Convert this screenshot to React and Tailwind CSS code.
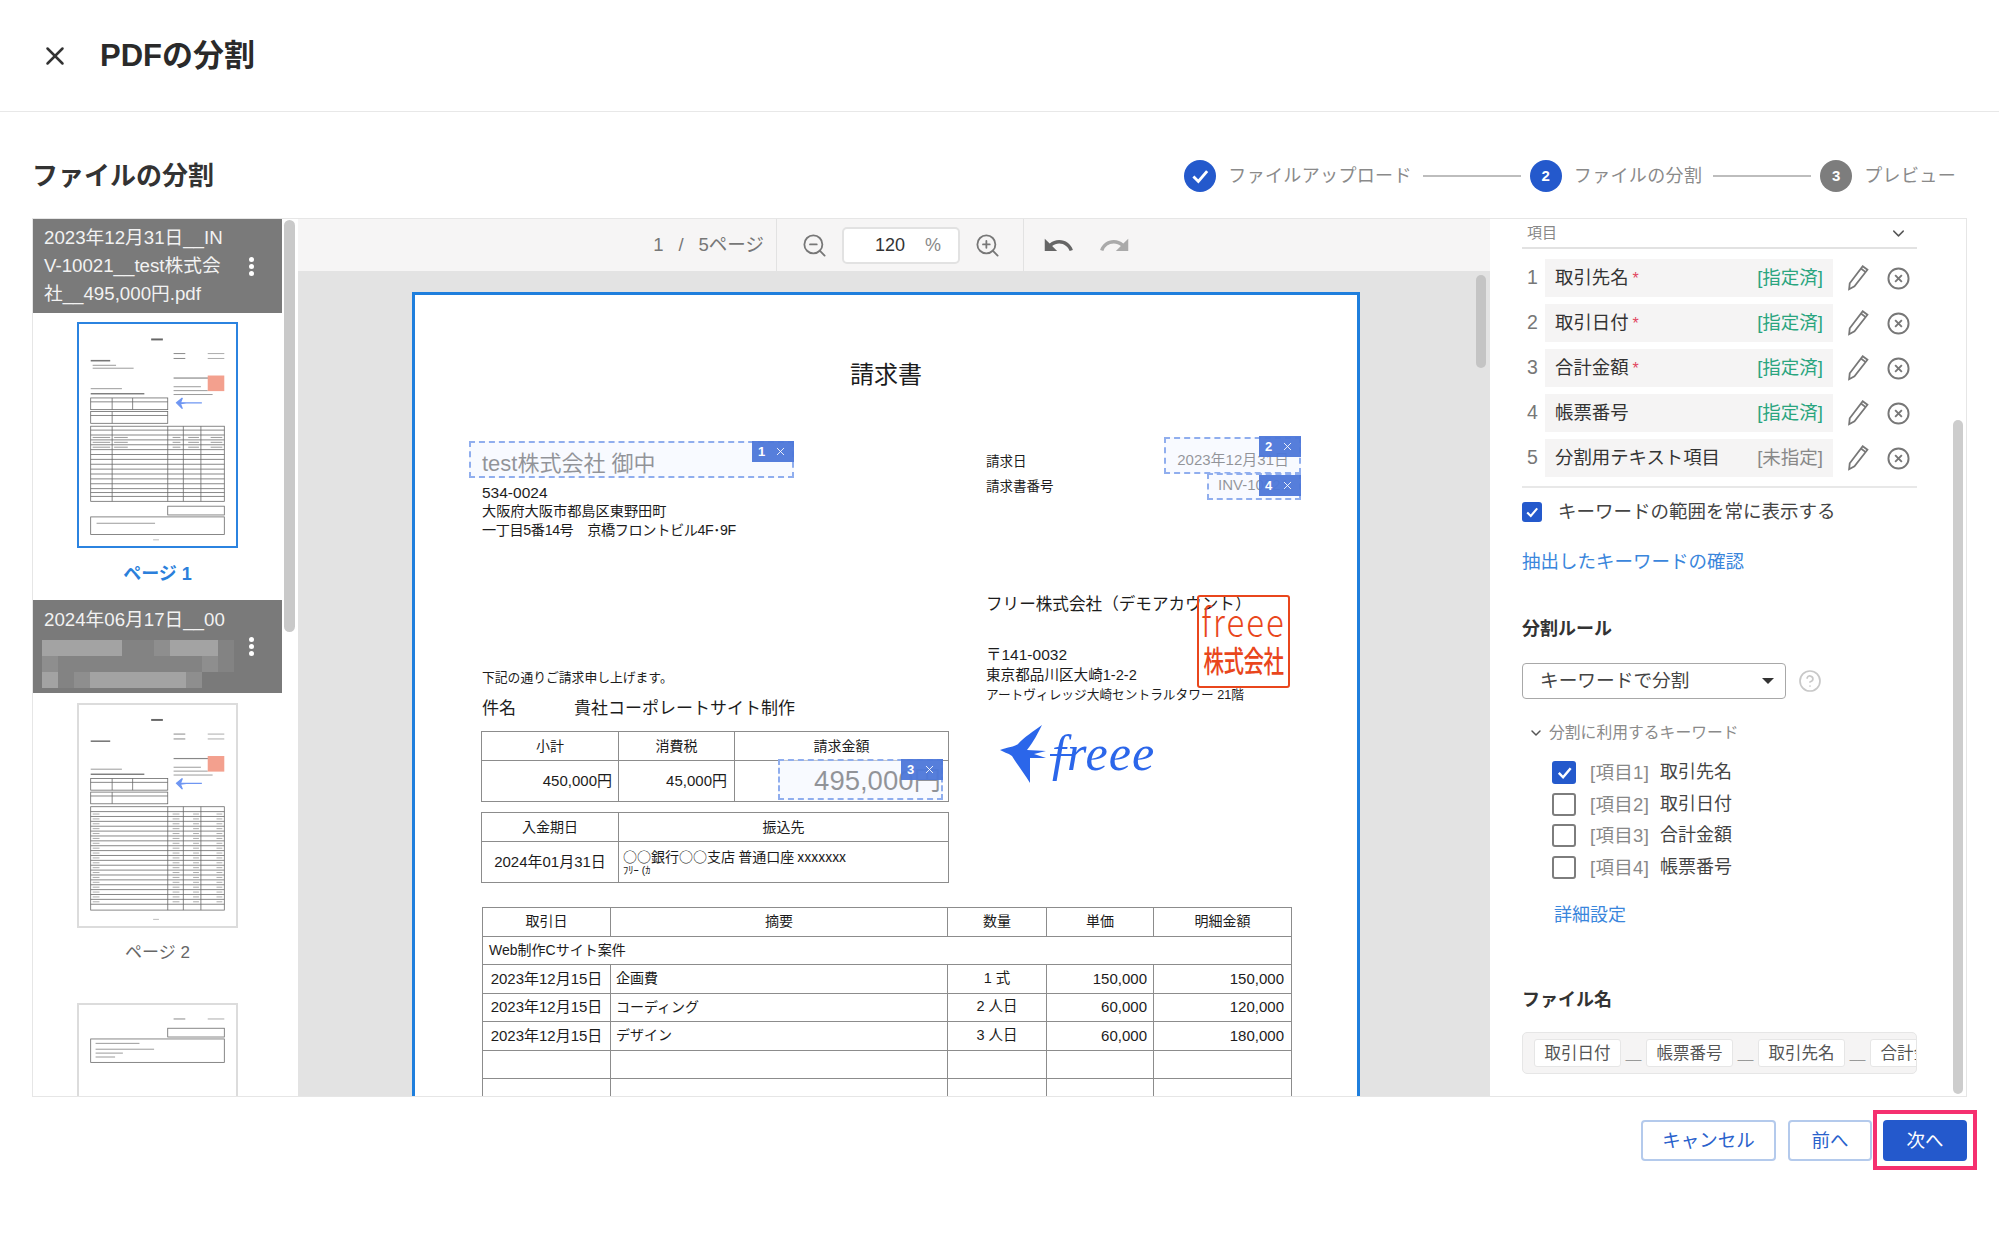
import { X, ZoomIn, ZoomOut, ChevronDown, CircleHelp } from "lucide-react";
import { MdUndo, MdRedo } from "react-icons/md";

const items = [
  { no: 1, name: "取引先名", required: true, done: true },
  { no: 2, name: "取引日付", required: true, done: true },
  { no: 3, name: "合計金額", required: true, done: true },
  { no: 4, name: "帳票番号", required: false, done: true },
  { no: 5, name: "分割用テキスト項目", required: false, done: false },
];

const keywords = [
  { tag: "[項目1]", name: "取引先名", checked: true },
  { tag: "[項目2]", name: "取引日付", checked: false },
  { tag: "[項目3]", name: "合計金額", checked: false },
  { tag: "[項目4]", name: "帳票番号", checked: false },
];

const lines = [
  ["2023年12月15日", "企画費", "1 式", "150,000", "150,000"],
  ["2023年12月15日", "コーディング", "2 人日", "60,000", "120,000"],
  ["2023年12月15日", "デザイン", "3 人日", "60,000", "180,000"],
  ["", "", "", "", ""],
  ["", "", "", "", ""],
];

const a = "bg-[#a3a3a3]";
const b = "bg-[#8e8e8e]";
const c = "bg-[#838383]";
const mosaic = [
  [a, a, a, a, a, c, c, b, a, a, a, c],
  [b, c, c, c, c, c, c, c, c, c, b, c],
  [a, c, b, a, a, a, a, a, a, b],
];

function CheckMark({ className }) {
  return (
    <svg viewBox="0 0 20 20" className={className} fill="none" stroke="white" strokeWidth="2.6">
      <path d="M4 10.5 L8.5 15 L16.5 5.5" />
    </svg>
  );
}

function Pencil() {
  return (
    <svg viewBox="2 2 18 22" className="w-[22px] h-[26px]" fill="none" stroke="#777" strokeWidth="1.5">
      <path d="M15 3 L19 6 L8 20 L3.5 22.5 L4 17.5 Z" />
      <path d="M13.5 5 L17.5 8" />
    </svg>
  );
}

function RemoveIcon() {
  return (
    <svg viewBox="0 0 24 24" className="w-[23px] h-[23px]" fill="none" stroke="#777" strokeWidth="2">
      <circle cx="12" cy="12" r="10.5" />
      <path d="M8.5 8.5 L15.5 15.5 M15.5 8.5 L8.5 15.5" />
    </svg>
  );
}

function Dots() {
  return (
    <div className="flex flex-col gap-[2px]">
      <span className="w-[5px] h-[5px] rounded-full bg-white" />
      <span className="w-[5px] h-[5px] rounded-full bg-white" />
      <span className="w-[5px] h-[5px] rounded-full bg-white" />
    </div>
  );
}

function MiniTable({ x, y, w, rowYs, colXs }) {
  const h = rowYs[rowYs.length - 1];
  return (
    <g stroke="#666" strokeWidth="0.8" fill="none">
      <rect x={x} y={y} width={w} height={h} />
      {rowYs.slice(0, -1).map((r) => (
        <line key={r} x1={x} x2={x + w} y1={y + r} y2={y + r} />
      ))}
      {colXs.map((cx) => (
        <line key={cx} x1={cx} x2={cx} y1={y} y2={y + h} />
      ))}
    </g>
  );
}

function MiniHead() {
  return (
    <>
      <rect x="74" y="14" width="12" height="2" fill="#666" />
      <rect x="12" y="36" width="20" height="1.6" fill="#777" />
      <rect x="97" y="29" width="12" height="1" fill="#888" />
      <rect x="97" y="34" width="12" height="1" fill="#888" />
      <rect x="132" y="29" width="17" height="1" fill="#aaa" />
      <rect x="132" y="34" width="17" height="1" fill="#aaa" />
      <rect x="97" y="54" width="40" height="1.2" fill="#888" />
      <rect x="97" y="63" width="28" height="1" fill="#999" />
      <rect x="97" y="67" width="35" height="1" fill="#999" />
      <rect x="97" y="71" width="40" height="1" fill="#999" />
      <rect x="132" y="52" width="17" height="16" fill="#f3a08e" />
      <rect x="12" y="65" width="32" height="1" fill="#999" />
      <rect x="12" y="70" width="55" height="1.4" fill="#777" />
      <path d="M100 80 L106 75 L104 80 L110 80 L104 81 L106 86 Z M110 80 H126" fill="#6f96f2" stroke="#6f96f2" strokeWidth="1.2" />
      <MiniTable x={12} y={75} w={79} rowYs={[4, 12]} colXs={[34, 55]} />
      <MiniTable x={12} y={89} w={79} rowYs={[4, 12]} colXs={[34]} />
    </>
  );
}

function ThumbOne() {
  const rowYs = [4, 9, 14, 19, 24, 29, 34, 39, 44, 49, 54, 59, 64, 68, 72, 77];
  return (
    <svg viewBox="0 0 161 226" className="w-[161px] h-[226px] border-[2.5px] border-[#2b83e0] bg-white shrink-0">
      <MiniHead />
      <rect x="14" y="41" width="24" height="1" fill="#999" />
      <rect x="14" y="44" width="42" height="1" fill="#999" />
      <MiniTable x={12} y={104} w={137} rowYs={rowYs} colXs={[34, 91, 107, 125]} />
      {[115, 120, 125].map((y) => (
        <g key={y} fill="#999">
          <rect x="14" y={y} width="18" height="1" />
          <rect x="36" y={y} width="14" height="1" />
          <rect x="96" y={y} width="8" height="1" />
          <rect x="112" y={y} width="11" height="1" />
          <rect x="135" y={y} width="12" height="1" />
        </g>
      ))}
      <MiniTable x={91} y={186} w={58} rowYs={[9]} colXs={[]} />
      <MiniTable x={12} y={197} w={137} rowYs={[18]} colXs={[]} />
      <rect x="18" y="203" width="60" height="1" fill="#999" />
      <rect x="76" y="220" width="6" height="1" fill="#bbb" />
    </svg>
  );
}

function ThumbTwo() {
  const rowYs = Array.from({ length: 20 }, (_, i) => 5 + i * 5).concat(106);
  return (
    <svg viewBox="0 0 161 226" className="w-[161px] h-[225px] border-2 border-[#dcdcdc] bg-white shrink-0">
      <MiniHead />
      <MiniTable x={12} y={104} w={137} rowYs={rowYs} colXs={[91, 107, 125]} />
      {rowYs.slice(0, 19).map((r) => (
        <g key={r} fill="#aaa">
          <rect x="14" y={104 + r + 2} width="7" height="1" />
          <rect x="96" y={104 + r + 2} width="7" height="1" />
          <rect x="117" y={104 + r + 2} width="6" height="1" />
          <rect x="141" y={104 + r + 2} width="6" height="1" />
        </g>
      ))}
      <rect x="76" y="219" width="6" height="1" fill="#bbb" />
    </svg>
  );
}

function ThumbThree() {
  return (
    <svg viewBox="0 0 161 226" className="w-[161px] h-[226px] border-2 border-[#dcdcdc] bg-white shrink-0">
      <rect x="97" y="13" width="12" height="1" fill="#888" />
      <rect x="132" y="13" width="17" height="1" fill="#aaa" />
      <MiniTable x={91} y={23} w={58} rowYs={[9]} colXs={[]} />
      <MiniTable x={12} y={34} w={137} rowYs={[24]} colXs={[]} />
      <rect x="17" y="38" width="45" height="1" fill="#999" />
      <rect x="17" y="44" width="60" height="1" fill="#999" />
      <rect x="17" y="48" width="28" height="1" fill="#999" />
      <rect x="17" y="52" width="20" height="1" fill="#999" />
    </svg>
  );
}

function ThumbColumn() {
  return (
    <div className="w-[265px] shrink-0 relative overflow-hidden">
      <div className="w-[249px] flex flex-col items-stretch">
        <div className="h-[94px] bg-[#7a7a7a] flex items-center justify-between pl-[11px] pr-[28px] text-[18.7px] leading-[28px] text-[#f2f2f2] whitespace-nowrap">
          <div>
            <div>2023年12月31日__IN</div>
            <div>V-10021__test株式会</div>
            <div>社__495,000円.pdf</div>
          </div>
          <Dots />
        </div>
        <div className="flex justify-center mt-[9px]">
          <ThumbOne />
        </div>
        <div className="h-[52px] flex items-center justify-center text-[18px] font-bold text-[#2b7fdb]">ページ 1</div>
        <div className="h-[93px] bg-[#7a7a7a] flex items-center justify-between pl-[9px] pr-[28px] text-[#f2f2f2] relative">
          <div className="flex flex-col">
            <div className="pl-[2px] text-[18.7px] leading-[28px] h-[35px] pt-[1px] whitespace-nowrap">2024年06月17日__00</div>
            {mosaic.map((row, i) => (
              <div key={i} className="flex">
                {row.map((cls, j) => (
                  <span key={j} className={`w-[16px] h-[16px] ${cls}`} />
                ))}
              </div>
            ))}
          </div>
          <Dots />
        </div>
        <div className="flex justify-center mt-[10px]">
          <ThumbTwo />
        </div>
        <div className="h-[75px] pt-[12px] text-center text-[17px] leading-[26px] text-[#666]">ページ 2</div>
        <div className="flex justify-center">
          <ThumbThree />
        </div>
      </div>
      <div className="absolute left-[251px] top-[1px] w-[11px] h-[412px] rounded-full bg-[#c9c9c9]" />
    </div>
  );
}

function Annotation({ no, boxClass, tagClass }) {
  return (
    <>
      <div className={`absolute border-2 border-dashed border-[#90aeee] bg-[#f2f6ff]/55 ${boxClass}`} />
      <div className={`absolute w-[42px] h-[21px] bg-[#4d77d9]/95 text-white flex items-center gap-[9px] pl-[6px] text-[13px] font-bold ${tagClass}`}>
        <span>{no}</span>
        <X size={13} strokeWidth={1.6} />
      </div>
    </>
  );
}

function Invoice() {
  return (
    <div className="relative w-[948px] h-[900px] ml-[114px] border-[3px] border-[#1f7fdd] bg-white text-[#1c1c1c] pl-[67px]">
      <div className="mt-[65px] h-[30px] -ml-[67px] text-center text-[24px] leading-[30px]">請求書</div>

      <div className="flex">
        <div className="w-[504px] shrink-0">
          <div className="mt-[59px] h-[30px] text-[22px] leading-[30px]">test株式会社 御中</div>
          <div className="mt-[4px] text-[14.2px] leading-[19px] whitespace-nowrap">
            <div className="text-[15.5px]">534-0024</div>
            <div>大阪府大阪市都島区東野田町</div>
            <div className="tracking-[-0.4px]">一丁目5番14号　京橋フロントビル4F･9F</div>
          </div>
          <div className="mt-[129px] h-[18px] text-[12.8px] leading-[18px]">下記の通りご請求申し上げます。</div>
          <div className="mt-[10px] h-[24px] flex text-[17px] leading-[24px]">
            <span className="w-[92px]">件名</span>
            <span>貴社コーポレートサイト制作</span>
          </div>
          <table className="mt-[10px] -ml-px w-[467px] table-fixed border-collapse text-[15px]">
            <colgroup>
              <col className="w-[137px]" />
              <col className="w-[116px]" />
              <col className="w-[214px]" />
            </colgroup>
            <tbody>
              <tr className="h-[29px] text-center text-[14px]">
                <td className="border border-[#8c8c8c]">小計</td>
                <td className="border border-[#8c8c8c]">消費税</td>
                <td className="border border-[#8c8c8c]">請求金額</td>
              </tr>
              <tr className="h-[41px] text-right">
                <td className="border border-[#8c8c8c] pr-[6px]">450,000円</td>
                <td className="border border-[#8c8c8c] pr-[7px]">45,000円</td>
                <td className="border border-[#8c8c8c] pr-[7px] text-[27.5px] leading-[30px]">495,000円</td>
              </tr>
            </tbody>
          </table>
          <table className="mt-[10px] -ml-px w-[467px] table-fixed border-collapse">
            <colgroup>
              <col className="w-[137px]" />
              <col className="w-[330px]" />
            </colgroup>
            <tbody>
              <tr className="h-[29px] text-center text-[14px]">
                <td className="border border-[#8c8c8c]">入金期日</td>
                <td className="border border-[#8c8c8c]">振込先</td>
              </tr>
              <tr className="h-[41px]">
                <td className="border border-[#8c8c8c] text-center text-[15px]">2024年01月31日</td>
                <td className="border border-[#8c8c8c] pl-[4px] text-[14px] leading-[15px]">
                  <div className="font-['Noto_Sans_CJK_JP',sans-serif]">○○銀行○○支店 普通口座 xxxxxxx</div>
                  <div className="text-[10.5px] leading-[12px]">ﾌﾘｰ (ｶ</div>
                </td>
              </tr>
            </tbody>
          </table>
        </div>

        <div className="w-[303px] pt-[63px]">
          <div className="h-[18px] flex items-center justify-between text-[13.5px]">
            <span>請求日</span>
            <span className="text-[15px] -translate-y-[2px]">2023年12月31日</span>
          </div>
          <div className="mt-[7px] h-[18px] flex items-center justify-between text-[13.5px]">
            <span>請求書番号</span>
            <span className="text-[15px] -translate-y-[2px]">INV-10021</span>
          </div>
          <div className="mt-[99px] h-[20px] text-[16.6px] leading-[20px] whitespace-nowrap">フリー株式会社（デモアカウント）</div>
          <div className="mt-[30px] text-[14.6px] leading-[20px] whitespace-nowrap">
            <div className="text-[15.5px]">〒141-0032</div>
            <div>東京都品川区大崎1-2-2</div>
            <div className="text-[12.7px]">アートヴィレッジ大崎セントラルタワー 21階</div>
          </div>
          <div className="mt-[18px] ml-[14px] h-[61px] flex items-center">
            <svg viewBox="0 0 72 61" className="w-[72px] h-[61px] shrink-0" fill="#2b66ea">
              <path d="M0 27 C8 24 14 24 18 21 C24 14 34 8 42 2 C38 10 34 18 27 27 L46 28 L34 31 L46 35 L30 35 C30 45 30 52 30 60 C24 50 16 40 12 33 C8 30 3 29 0 27 Z" />
              <path d="M50 32 H72" stroke="#2b66ea" strokeWidth="2" />
            </svg>
            <span className="-ml-[20px] font-['Liberation_Serif',serif] italic text-[50px] leading-[61px] tracking-[1px] text-[#2b66ea]">freee</span>
          </div>
        </div>
      </div>

      <table className="mt-[24px] w-[809px] table-fixed border-collapse text-[15px]">
        <colgroup>
          <col className="w-[128px]" />
          <col className="w-[337px]" />
          <col className="w-[99px]" />
          <col className="w-[107px]" />
          <col className="w-[138px]" />
        </colgroup>
        <tbody>
          <tr className="h-[28.5px] text-center text-[14px]">
            {["取引日", "摘要", "数量", "単価", "明細金額"].map((h) => (
              <td key={h} className="border border-[#8c8c8c]">{h}</td>
            ))}
          </tr>
          <tr className="h-[28.5px]">
            <td colSpan={5} className="border border-[#8c8c8c] pl-[6px] text-[14px]">Web制作Cサイト案件</td>
          </tr>
          {lines.map((l, i) => (
            <tr key={i} className="h-[28.5px]">
              <td className="border border-[#8c8c8c] text-center">{l[0]}</td>
              <td className="border border-[#8c8c8c] pl-[5px] text-[14px]">{l[1]}</td>
              <td className="border border-[#8c8c8c] text-center text-[14.5px]">{l[2]}</td>
              <td className="border border-[#8c8c8c] text-right pr-[6px]">{l[3]}</td>
              <td className="border border-[#8c8c8c] text-right pr-[7px]">{l[4]}</td>
            </tr>
          ))}
        </tbody>
      </table>

      <Annotation no={1} boxClass="left-[54px] top-[146px] w-[325px] h-[37px]" tagClass="left-[337px] top-[146px]" />
      <Annotation no={2} boxClass="left-[749px] top-[142px] w-[137px] h-[37px]" tagClass="left-[844px] top-[141px]" />
      <Annotation no={4} boxClass="left-[792px] top-[178px] w-[94px] h-[27px]" tagClass="left-[844px] top-[180px]" />
      <Annotation no={3} boxClass="left-[363px] top-[464px] w-[165px] h-[41px]" tagClass="left-[486px] top-[464px]" />

      <div className="absolute left-[782px] top-[300px] w-[93px] h-[93px] border-2 border-[#e9461c] rounded-[3px] text-[#e9461c] flex flex-col items-center font-['Noto_Sans_CJK_JP',sans-serif]">
        <span className="text-[33px] leading-[38px] tracking-[2px] scale-y-[1.2] origin-top font-light">freee</span>
        <span className="mt-[9px] text-[20.5px] leading-[30px] font-medium whitespace-nowrap scale-y-[1.45] tracking-[-0.5px]">株式会社</span>
      </div>
    </div>
  );
}

function Viewer() {
  return (
    <div className="w-[1192px] shrink-0 flex flex-col">
      <div className="h-[52px] shrink-0 bg-[#f6f5f5] flex items-center text-[#777]">
        <div className="w-[479px] h-full flex items-center justify-end pr-[12px] text-[18.5px] border-r border-[#e2e2e2]">
          <span>1</span>
          <span className="mx-[15px]">/</span>
          <span>5ページ</span>
        </div>
        <div className="w-[247px] h-full flex items-center pl-[24px] border-r border-[#e2e2e2]">
          <ZoomOut size={27} strokeWidth={1.6} />
          <div className="ml-[14px] w-[118px] h-[37px] bg-white border-2 border-[#e2e2e2] rounded-[5px] flex items-center pl-[31px] text-[18px]">
            <span className="text-[#333]">120</span>
            <span className="ml-[20px] text-[#888]">%</span>
          </div>
          <ZoomIn size={27} strokeWidth={1.6} className="ml-[14px]" />
        </div>
        <MdUndo size={33} className="ml-[18px] text-[#666]" />
        <MdRedo size={33} className="ml-[23px] text-[#aaa]" />
      </div>
      <div className="flex-1 relative bg-[#e3e3e3] overflow-hidden pt-[21px]">
        <Invoice />
        <div className="absolute right-[4px] top-[4px] w-[10px] h-[93px] rounded-full bg-[#c4c4c4]" />
      </div>
    </div>
  );
}

function SettingsPanel() {
  return (
    <div className="flex-1 relative overflow-hidden bg-white pl-[32px] text-[#333]">
      <div className="w-[395px]">
        <div className="h-[30px] flex items-center justify-between px-[5px] border-b-2 border-[#e2e2e2] text-[15px] text-[#888]">
          <span>項目</span>
          <ChevronDown size={19} strokeWidth={1.8} className="mr-[4px] text-[#555]" />
        </div>
        <div className="mt-[10px] flex flex-col gap-[7px]">
          {items.map((it) => (
            <div key={it.no} className="h-[38px] flex items-center">
              <span className="w-[23px] pl-[5px] text-[19.5px] text-[#777]">{it.no}</span>
              <div className="w-[288px] h-full bg-[#f5f4f4] flex items-center justify-between pl-[10px] pr-[10px] text-[18.4px]">
                <span>
                  {it.name}
                  {it.required && <span className="ml-[4px] text-[#e2455f] text-[16px]">*</span>}
                </span>
                <span className={it.done ? "text-[#2aa57e] text-[18.5px]" : "text-[#888] text-[18.5px]"}>
                  {it.done ? "[指定済]" : "[未指定]"}
                </span>
              </div>
              <span className="ml-[14px]"><Pencil /></span>
              <span className="ml-[18px]"><RemoveIcon /></span>
            </div>
          ))}
        </div>
        <div className="mt-[9px] border-t-2 border-[#e8e8e8]" />
        <div className="mt-[14px] h-[20px] flex items-center text-[18.5px]">
          <span className="w-[20px] h-[20px] rounded-[3px] bg-[#2459cc] flex items-center justify-center">
            <CheckMark className="w-[16px] h-[16px]" />
          </span>
          <span className="ml-[16px] text-[#444]">キーワードの範囲を常に表示する</span>
        </div>
        <div className="mt-[28px] h-[24px] text-[18.5px] leading-[24px] text-[#3a86dc]">抽出したキーワードの確認</div>
        <div className="mt-[43px] h-[24px] text-[18px] leading-[24px] font-bold">分割ルール</div>
        <div className="mt-[22px] flex items-center">
          <div className="w-[264px] h-[36px] border border-[#a8a8a8] rounded-[4px] flex items-center justify-between pl-[17px] pr-[11px] text-[18.7px] text-[#444]">
            <span>キーワードで分割</span>
            <span className="w-0 h-0 border-x-[6px] border-x-transparent border-t-[6px] border-t-[#333]" />
          </div>
          <CircleHelp size={24} strokeWidth={1.7} className="ml-[12px] text-[#c8c8c8]" />
        </div>
        <div className="mt-[24px] h-[20px] pl-[6px] flex items-center text-[15.8px] text-[#8a8a8a]">
          <ChevronDown size={16} strokeWidth={2.2} className="text-[#555]" />
          <span className="ml-[5px]">分割に利用するキーワード</span>
        </div>
        <div className="mt-[14px] pl-[30px]">
          {keywords.map((k) => (
            <div key={k.tag} className="h-[31.6px] flex items-center text-[18px]">
              <span className={k.checked ? "w-[24px] h-[23px] rounded-[3px] bg-[#2459cc] flex items-center justify-center" : "w-[24px] h-[23px] rounded-[3px] border-[2.5px] border-[#7d7d7d] bg-white"}>
                {k.checked && <CheckMark className="w-[19px] h-[19px]" />}
              </span>
              <span className="ml-[14px] w-[70px] text-[#888] text-[18.5px] tracking-[0.3px]">{k.tag}</span>
              <span className="text-[#444]">{k.name}</span>
            </div>
          ))}
        </div>
        <div className="mt-[20px] h-[24px] pl-[32px] text-[18px] leading-[24px] text-[#3a86dc]">詳細設定</div>
        <div className="mt-[61px] h-[24px] text-[18px] leading-[24px] font-bold">ファイル名</div>
        <div className="mt-[20px] h-[42px] rounded-[5px] border border-[#e6e6e6] bg-[#f5f4f4] flex items-center pl-[11px] overflow-hidden text-[16.5px] text-[#555]">
          {["取引日付", "帳票番号", "取引先名", "合計金額"].map((t, i) => (
            <div key={t} className="flex items-center shrink-0">
              {i > 0 && <span className="w-[25px] text-center text-[#999] text-[14px]">__</span>}
              <span className="w-[87px] h-[28px] bg-white border border-[#e6e6e6] rounded-[3px] flex items-center justify-center">{t}</span>
            </div>
          ))}
        </div>
      </div>
      <div className="absolute right-[3px] top-[201px] w-[10px] h-[674px] rounded-full bg-[#cdcdcd]" />
    </div>
  );
}

function Stepper() {
  return (
    <div className="flex items-center text-[18px] tracking-[0.35px] text-[#8a8a8a] pr-[11px]">
      <span className="w-[32px] h-[32px] rounded-full bg-[#2459cc] flex items-center justify-center">
        <CheckMark className="w-[22px] h-[22px]" />
      </span>
      <span className="ml-[12px]">ファイルアップロード</span>
      <span className="ml-[11px] mr-[9px] w-[98px] h-[2px] bg-[#bdbdbd]" />
      <span className="w-[32px] h-[32px] rounded-full bg-[#2459cc] text-white text-[15px] font-bold flex items-center justify-center">2</span>
      <span className="ml-[12px]">ファイルの分割</span>
      <span className="ml-[11px] mr-[9px] w-[98px] h-[2px] bg-[#bdbdbd]" />
      <span className="w-[32px] h-[32px] rounded-full bg-[#7d7d7d] text-white text-[15px] font-bold flex items-center justify-center">3</span>
      <span className="ml-[12px]">プレビュー</span>
    </div>
  );
}

export default function App() {
  return (
    <div className="w-[1999px] h-[1234px] overflow-hidden bg-white text-[#2a2a2a] font-['Liberation_Sans','Noto_Sans_CJK_JP',sans-serif]">
      <header className="h-[112px] border-b border-[#e8e8e8] flex items-center pl-[40px]">
        <X size={30} strokeWidth={2} className="text-[#333]" />
        <h1 className="ml-[30px] text-[31px] font-bold leading-none">PDFの分割</h1>
      </header>

      <main className="px-[32px]">
        <div className="h-[106px] pt-[22px] flex items-center justify-between">
          <h2 className="text-[26px] font-bold leading-none text-[#333]">ファイルの分割</h2>
          <Stepper />
        </div>
        <div className="h-[879px] border border-[#e6e6e6] flex overflow-hidden">
          <ThumbColumn />
          <Viewer />
          <SettingsPanel />
        </div>
        <div className="mt-[23px] flex justify-end text-[18.5px]">
          <button className="w-[135px] h-[41px] rounded-[4px] border-2 border-[#b4caec] bg-white text-[#2a62cc]">キャンセル</button>
          <button className="ml-[12px] w-[84px] h-[41px] rounded-[4px] border-2 border-[#b4caec] bg-white text-[#2a62cc]">前へ</button>
          <div className="relative ml-[11px]">
            <button className="w-[84px] h-[41px] rounded-[4px] bg-[#2459cc] text-white">次へ</button>
            <div className="absolute -left-[10px] -right-[10px] -top-[10px] -bottom-[9px] border-4 border-[#f5306f]" />
          </div>
        </div>
      </main>
    </div>
  );
}
